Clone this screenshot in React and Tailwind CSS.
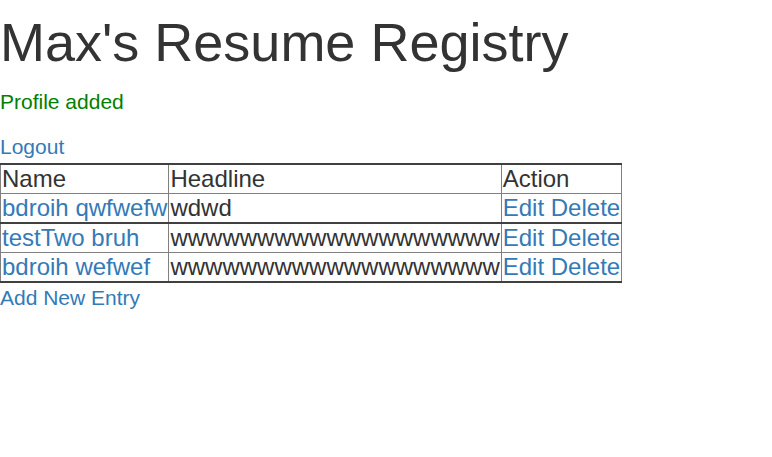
const rows = [
  { name: 'bdroih qwfwefw', headline: 'wdwd' },
  { name: 'testTwo bruh', headline: 'wwwwwwwwwwwwwwwwwww' },
  { name: 'bdroih wefwef', headline: 'wwwwwwwwwwwwwwwwwww' },
];

export default function App() {
  return (
    <div className="min-h-screen bg-white text-[#333] font-['Liberation_Sans',Arial,sans-serif] text-[21px] leading-[30px]">
      <h1 className="mt-[13px] mb-[15px] text-[54px] leading-[59px] font-normal">Max's Resume Registry</h1>
      <p className="mb-[15px] text-[#008000]">Profile added</p>
      <p className="mb-px">
        <a href="#" className="text-[#337ab7]">Logout</a>
      </p>
      <table className="border-collapse text-[24px] leading-[28px] border-t-2 border-l border-b-2 border-r border-t-[#404040] border-l-[#404040] border-b-[#404040] border-r-[#808080]">
        <thead>
          <tr>
            <th className="border border-[#808080] px-px text-left font-normal">Name</th>
            <th className="border border-[#808080] px-px text-left font-normal">Headline</th>
            <th className="border border-[#808080] px-px text-left font-normal">Action</th>
          </tr>
        </thead>
        <tbody>
          {rows.map((row, i) => (
            <tr key={row.name} className={i === 0 ? 'border-b-2 border-b-[#404040]' : ''}>
              <td className="border border-[#808080] px-px whitespace-nowrap">
                <a href="#" className="text-[#337ab7]">{row.name}</a>
              </td>
              <td className="border border-[#808080] px-px whitespace-nowrap">{row.headline}</td>
              <td className="border border-[#808080] px-px whitespace-nowrap">
                <a href="#" className="text-[#337ab7]">Edit</a>{' '}
                <a href="#" className="text-[#337ab7]">Delete</a>
              </td>
            </tr>
          ))}
        </tbody>
      </table>
      <a href="#" className="text-[#337ab7]">Add New Entry</a>
    </div>
  );
}
